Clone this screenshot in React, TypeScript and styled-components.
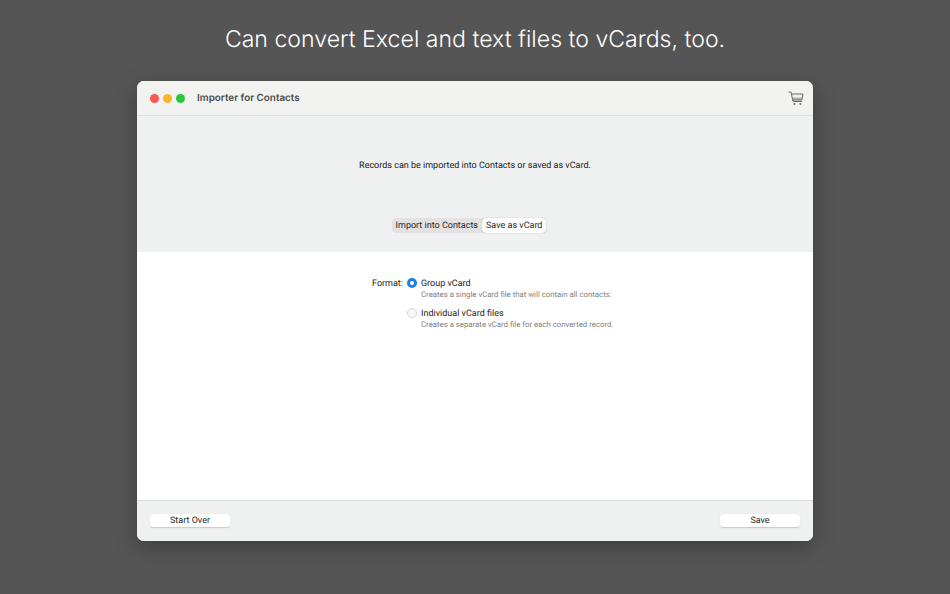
import React from "react";
import styled, { createGlobalStyle } from "styled-components";

const Global = createGlobalStyle`
  html, body { margin: 0; padding: 0; width: 950px; height: 594px; overflow: hidden; background: #555555; }
  * { box-sizing: border-box; }
  body { font-family: "Roboto", "Liberation Sans", sans-serif; text-rendering: geometricPrecision; }
`;

const Page = styled.div`
  width: 950px;
  height: 594px;
  display: flex;
  flex-direction: column;
  align-items: center;
  background: #555555;
`;

const Headline = styled.h1`
  margin: 0;
  height: 81px;
  padding-top: 24px;
  font-family: "Inter", "Liberation Sans", sans-serif;
  font-size: 23.1px;
  line-height: 30px;
  font-weight: 300;
  color: #ffffff;
`;

const Window = styled.div`
  width: 676px;
  height: 460px;
  border-radius: 7px;
  overflow: hidden;
  display: flex;
  flex-direction: column;
  background: #ffffff;
  box-shadow: 0 6px 22px rgba(0, 0, 0, 0.28);
`;

const TitleBar = styled.div`
  height: 35px;
  flex: none;
  display: flex;
  align-items: center;
  padding: 0 9px 0 13px;
  background: #f2f2f1;
  border-bottom: 1px solid #dfdfdf;
`;

const Lights = styled.div`
  display: flex;
  gap: 4px;
  margin-right: 12px;
`;

const Light = styled.span<{ $c: string }>`
  width: 9px;
  height: 9px;
  border-radius: 50%;
  background: ${(p) => p.$c};
`;

const Title = styled.div`
  flex: 1;
  font-family: "Inter", "Liberation Sans", sans-serif;
  font-size: 9.9px;
  font-weight: 600;
  color: #4b4b4b;
`;

const Header = styled.div`
  height: 136px;
  flex: none;
  display: flex;
  flex-direction: column;
  align-items: center;
  background: #eff0f0;
`;

const Message = styled.div`
  margin-top: 43px;
  height: 14px;
  font-size: 9px;
  line-height: 14px;
  color: #222222;
`;

const Segments = styled.div`
  margin: 45px 12px 0 0;
  display: flex;
  background: #e2e2e2;
  border-radius: 4px;
  height: 15px;
`;

const Segment = styled.div<{ $active?: boolean }>`
  padding: 1px 4px 0;
  font-size: 9px;
  line-height: 14px;
  color: #262626;
  border-radius: 4px;
  background: ${(p) => (p.$active ? "#ffffff" : "transparent")};
  box-shadow: ${(p) => (p.$active ? "0 0 1px rgba(0,0,0,0.45)" : "none")};
`;

const Body = styled.div`
  flex: 1;
  background: #ffffff;
  padding: 26px 0 0 235px;
  display: flex;
  gap: 4px;
`;

const FormatLabel = styled.div`
  font-size: 9px;
  line-height: 12px;
  color: #262626;
`;

const Options = styled.div`
  display: flex;
  flex-direction: column;
  gap: 8px;
`;

const Option = styled.div`
  display: grid;
  grid-template-columns: 10px auto;
  column-gap: 4px;
`;

const Radio = styled.span<{ $on?: boolean }>`
  width: 10px;
  height: 10px;
  border-radius: 50%;
  background: ${(p) => (p.$on ? "#1f7fe8" : "#f8f8f8")};
  border: ${(p) => (p.$on ? "none" : "1px solid #d4d4d4")};
  display: flex;
  align-items: center;
  justify-content: center;
  &::after {
    content: "";
    display: ${(p) => (p.$on ? "block" : "none")};
    width: 4px;
    height: 4px;
    border-radius: 50%;
    background: #ffffff;
  }
`;

const OptionName = styled.div`
  font-size: 9px;
  line-height: 12px;
  color: #262626;
`;

const OptionHint = styled.div`
  grid-column: 2;
  margin-top: -1px;
  font-size: 7.8px;
  line-height: 11px;
  color: #808080;
`;

const Footer = styled.div`
  height: 41px;
  flex: none;
  display: flex;
  align-items: center;
  justify-content: space-between;
  padding: 0 13px 1px;
  background: #eff0f0;
  border-top: 1px solid #dcdcdc;
`;

const Button = styled.div`
  width: 80px;
  height: 13px;
  padding-top: 1px;
  border-radius: 3px;
  background: #ffffff;
  box-shadow: 0 0.5px 1px rgba(0, 0, 0, 0.16);
  text-align: center;
  font-size: 9px;
  line-height: 13px;
  color: #262626;
`;

const Cart = () => (
  <svg width="16" height="14" viewBox="0 0 16 14" fill="none" stroke="#6a6a6a" strokeWidth="1">
    <path d="M3.8 6.5H14.2L13.8 9H4.4Z" fill="#b4b4b4" stroke="none" />
    <path d="M0.5 1H3L5 10.5H14" />
    <path d="M3.4 3H15L13.8 9H4.5" />
    <circle cx="6.3" cy="13" r="1" fill="#6a6a6a" stroke="none" />
    <circle cx="12.3" cy="13" r="1" fill="#6a6a6a" stroke="none" />
  </svg>
);

export default function App() {
  return (
    <Page>
      <Global />
      <Headline>Can convert Excel and text files to vCards, too.</Headline>
      <Window>
        <TitleBar>
          <Lights>
            <Light $c="#fc5753" />
            <Light $c="#fdb32a" />
            <Light $c="#28c93f" />
          </Lights>
          <Title>Importer for Contacts</Title>
          <Cart />
        </TitleBar>
        <Header>
          <Message>Records can be imported into Contacts or saved as vCard.</Message>
          <Segments>
            <Segment>Import into Contacts</Segment>
            <Segment $active>Save as vCard</Segment>
          </Segments>
        </Header>
        <Body>
          <FormatLabel>Format:</FormatLabel>
          <Options>
            <Option>
              <Radio $on />
              <OptionName>Group vCard</OptionName>
              <OptionHint>Creates a single vCard file that will contain all contacts.</OptionHint>
            </Option>
            <Option>
              <Radio />
              <OptionName>Individual vCard files</OptionName>
              <OptionHint>Creates a separate vCard file for each converted record.</OptionHint>
            </Option>
          </Options>
        </Body>
        <Footer>
          <Button>Start Over</Button>
          <Button>Save</Button>
        </Footer>
      </Window>
    </Page>
  );
}
